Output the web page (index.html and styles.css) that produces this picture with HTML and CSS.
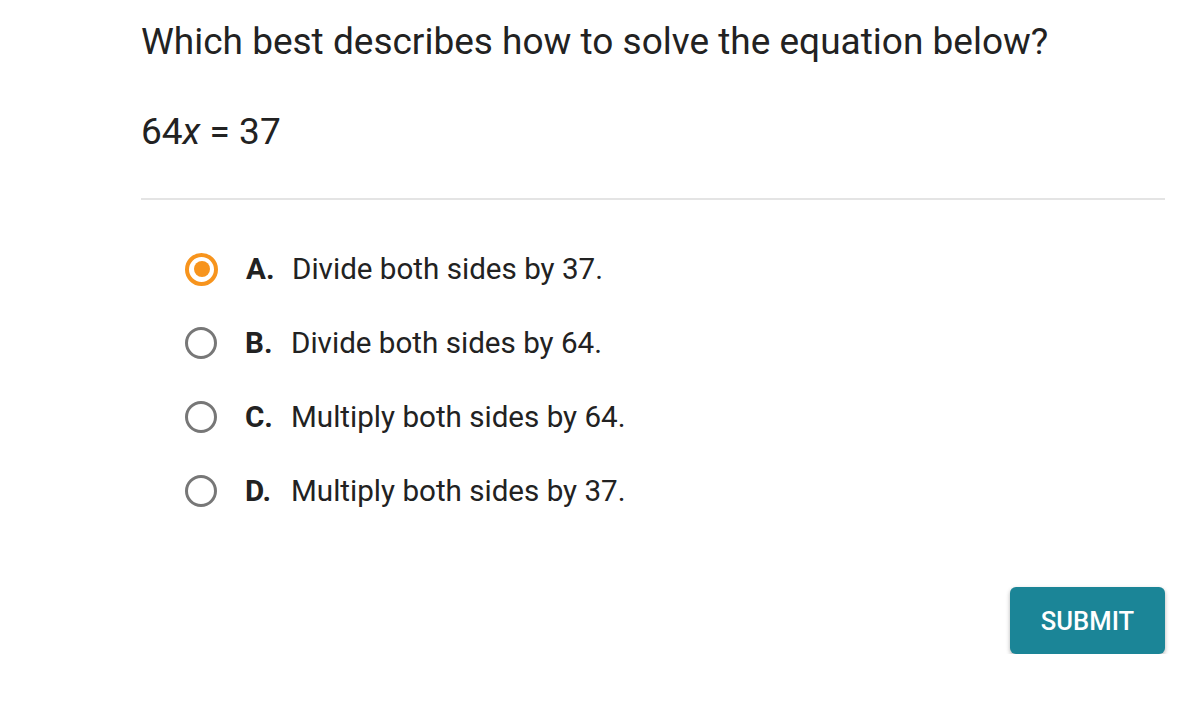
FILE: index.html
```html
<!DOCTYPE html>
<html>
<head>
<meta charset="utf-8">
<link rel="stylesheet" href="styles.css">
</head>
<body>
<main class="quiz">
  <h1 class="question">Which best describes how to solve the equation below?</h1>
  <p class="equation">64<i>x</i> = 37</p>
  <hr class="divider">
  <ul class="options">
    <li class="option selected"><span class="radio"></span><b class="letter">A.</b><span class="text">Divide both sides by 37.</span></li>
    <li class="option"><span class="radio"></span><b class="letter">B.</b><span class="text">Divide both sides by 64.</span></li>
    <li class="option"><span class="radio"></span><b class="letter">C.</b><span class="text">Multiply both sides by 64.</span></li>
    <li class="option"><span class="radio"></span><b class="letter">D.</b><span class="text">Multiply both sides by 37.</span></li>
  </ul>
  <div class="actions"><button class="submit">SUBMIT</button></div>
</main>
</body>
</html>
```
FILE: styles.css
```css
html, body { margin: 0; padding: 0; background: #fff; }
body { font-family: Roboto, "Noto Sans", sans-serif; color: #222; }
.quiz { padding: 18px 35px 0 141px; }
.question { font-size: 37px; font-weight: 400; margin: 0; line-height: 48px; }
.equation { font-size: 37px; margin: 42px 0 0; line-height: 48px; }
.equation i { font-style: italic; }
.divider { border: 0; height: 2px; background: #e4e4e4; margin: 42px 0 0 0; }
.options { list-style: none; margin: 51px 0 0; padding: 0 0 0 44px; display: flex; flex-direction: column; gap: 38px; }
.option { display: flex; align-items: center; height: 36px; font-size: 29.6px; }
.radio { width: 26px; height: 26px; border: 3px solid #777; border-radius: 50%; box-sizing: content-box; display: flex; align-items: center; justify-content: center; margin-right: 28px; flex: none; }
.selected .radio { border: 4px solid #f7941d; width: 25px; height: 25px; }
.selected .radio::after { content: ""; width: 16px; height: 16px; border-radius: 50%; background: #f7941d; }
.letter { font-weight: 700; width: 46px; }
.actions { display: flex; justify-content: flex-end; margin-top: 78px; }
.submit { width: 155px; height: 67px; background: #1b8597; color: #fff; border: 0; border-radius: 6px; font-family: Roboto, sans-serif; font-size: 25.6px; font-weight: 500; box-shadow: 0 2px 4px rgba(0,0,0,0.3); }
```
